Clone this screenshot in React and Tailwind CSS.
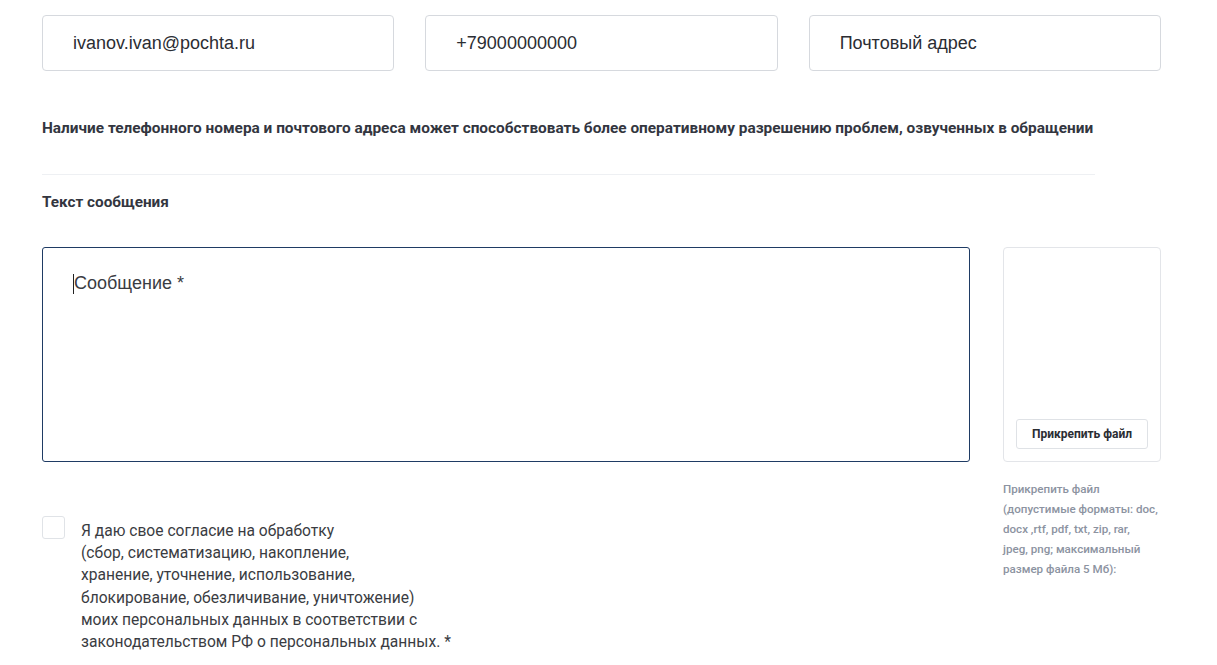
import React from 'react';

const sans = { fontFamily: 'Roboto, "Liberation Sans", sans-serif' };
const arial = { fontFamily: '"Liberation Sans", Arial, sans-serif' };

function Field({ value, placeholder }) {
  return (
    <div className="h-[56px] rounded-[4px] border border-[#d6d9de] bg-white flex items-center px-[30px]">
      <span className="text-[18px] text-[#2b2d33]" style={arial}>
        {value || placeholder}
      </span>
    </div>
  );
}

export default function App() {
  return (
    <div className="min-h-screen bg-white px-[42px] pt-[15px] text-[#33363f]" style={sans}>
      {/* contacts */}
      <div className="grid grid-cols-3 gap-x-[31px] w-[1119px]">
        <Field value="ivanov.ivan@pochta.ru" />
        <Field value="+79000000000" />
        <Field placeholder="Почтовый адрес" />
      </div>

      <p className="mt-[48px] text-[15.4px] leading-[18px] font-bold text-[#33363f] whitespace-nowrap">
        Наличие телефонного номера и почтового адреса может способствовать более оперативному разрешению проблем, озвученных в обращении
      </p>

      <div className="mt-[37px] h-px w-[1053px] bg-[#eef0f3]" />

      <div className="mt-[18px] text-[15.3px] leading-[18px] font-bold">Текст сообщения</div>

      {/* message + attachment */}
      <div className="mt-[36px] flex gap-[33px] w-[1119px]">
        <div className="w-[928px] h-[215px] rounded-[3px] border border-[#1f3b64] pt-[22px] pl-[30px]">
          <div className="flex items-center text-[18px] text-[#3a3c42]" style={arial}>
            <span className="w-px h-[20px] bg-[#222]" />
            Сообщение *
          </div>
        </div>
        <div className="w-[158px]">
          <div className="h-[215px] rounded-[4px] border border-[#e3e5e9] flex flex-col justify-end items-center pb-[12px]">
            <button className="w-[132px] h-[30px] rounded-[3px] border border-[#dfe2e6] bg-white text-[12px] font-bold text-[#2b2d33]">
              Прикрепить файл
            </button>
          </div>
          <p className="mt-[17px] text-[11.6px] leading-[20px] font-medium text-[#8c93a1] whitespace-nowrap">
            Прикрепить файл
            <br />
            (допустимые форматы: doc,
            <br />
            docx ,rtf, pdf, txt, zip, rar,
            <br />
            jpeg, png; максимальный
            <br />
            размер файла 5 Мб):
          </p>
        </div>
      </div>

      {/* consent */}
      <div className="-mt-[63px] flex gap-[16px] w-[460px]">
        <div className="w-[23px] h-[23px] shrink-0 rounded-[3px] border border-[#e0e3e7] bg-white" />
        <p className="mt-[4px] text-[15.6px] leading-[22.2px] text-[#3a3c42] whitespace-nowrap">
          Я даю свое согласие на обработку
          <br />
          (сбор, систематизацию, накопление,
          <br />
          хранение, уточнение, использование,
          <br />
          блокирование, обезличивание, уничтожение)
          <br />
          моих персональных данных в соответствии с
          <br />
          законодательством РФ о персональных данных. *
        </p>
      </div>
    </div>
  );
}
